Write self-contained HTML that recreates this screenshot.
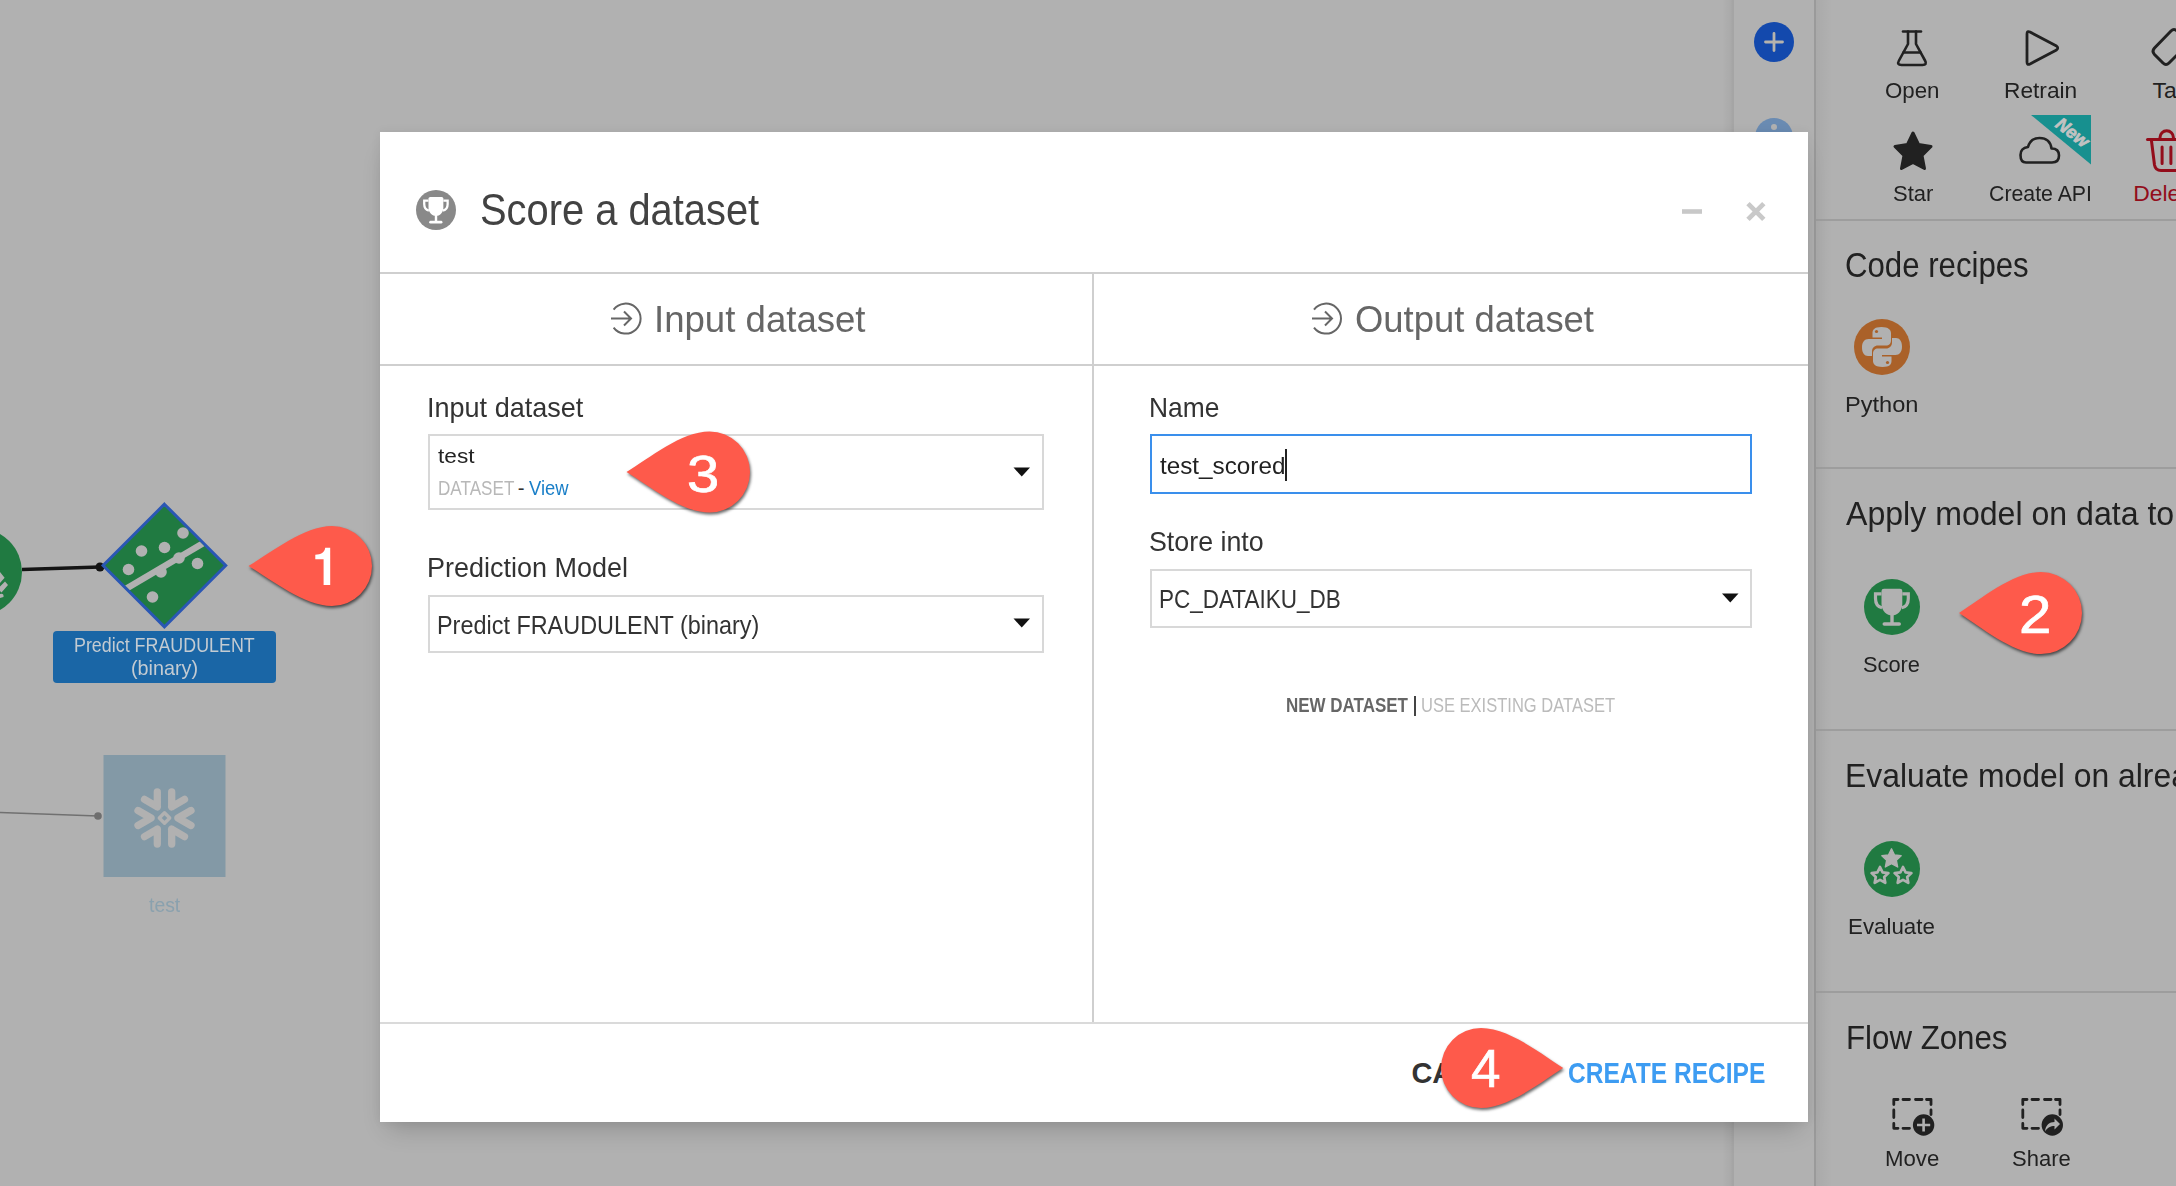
<!DOCTYPE html>
<html><head><meta charset="utf-8">
<style>
html,body{margin:0;padding:0;}
body{width:2176px;height:1186px;overflow:hidden;position:relative;background:#b1b1b1;font-family:"Liberation Sans",sans-serif;}
.t{position:absolute;white-space:nowrap;transform-origin:0 0;}
.abs{position:absolute;}
svg{position:absolute;left:0;top:0;overflow:visible;}
</style></head>
<body>
<!-- canvas column lines & panel shadow -->
<div class="abs" style="left:1722px;top:0;width:12px;height:1186px;background:linear-gradient(90deg,rgba(0,0,0,0) 0%,rgba(0,0,0,0.04) 70%,rgba(0,0,0,0.09) 100%);"></div>
<div class="abs" style="left:1733px;top:0;width:1px;height:1186px;background:#a5a5a5;"></div>
<div class="abs" style="left:1814px;top:0;width:2px;height:1186px;background:#9a9a9a;"></div>
<div class="abs" style="left:1816px;top:0;width:16px;height:1186px;background:linear-gradient(90deg,rgba(0,0,0,0.045),rgba(0,0,0,0));"></div>
<!-- panel separators -->
<div class="abs" style="left:1816px;top:219px;width:360px;height:2px;background:#9d9d9d;"></div>
<div class="abs" style="left:1816px;top:467px;width:360px;height:2px;background:#9d9d9d;"></div>
<div class="abs" style="left:1816px;top:729px;width:360px;height:2px;background:#9d9d9d;"></div>
<div class="abs" style="left:1816px;top:991px;width:360px;height:2px;background:#9d9d9d;"></div>

<svg width="2176" height="1186" viewBox="0 0 2176 1186">
  <!-- plus button -->
  <circle cx="1774" cy="42" r="20" fill="#1349ad"/>
  <path d="M1765.5,42 H1782.5 M1774,33.5 V50.5" stroke="#b5b3ad" stroke-width="2.8" stroke-linecap="round"/>
  <!-- info button (mostly hidden) -->
  <circle cx="1774" cy="137" r="19" fill="#6a8bb2"/>
  <circle cx="1774" cy="127" r="3" fill="#b1b1b1"/>

  <!-- flask (Open) -->
  <g fill="none" stroke="#212121" stroke-width="2.6" stroke-linecap="round" stroke-linejoin="round">
    <path d="M1903,31.5 H1921"/>
    <path d="M1908,31.5 V44 L1899,60.5 Q1896.5,65 1901.5,65 H1922.5 Q1927.5,65 1925,60.5 L1916,44 V31.5"/>
    <path d="M1903.5,52.5 H1920.5"/>
    <!-- play (Retrain) -->
    <path d="M2027,34 Q2027,30.5 2030,32 L2056.5,46 Q2059,48 2056.5,50 L2030,64 Q2027,65.5 2027,62 Z" stroke-width="2.8"/>
    <!-- tag (partial) -->
    <path d="M2192,46 L2177,31 Q2174,28 2171,31 L2154.5,48 Q2151.5,51.3 2154.5,54.5 L2163,63 Q2166,66 2169,63 L2192,40" stroke-width="3"/>
    <!-- cloud -->
    <path d="M2026,162.5 H2052 Q2059,162.5 2059,155.5 Q2059,148.5 2051.5,148.5 Q2050,138 2039.5,138 Q2030.5,138 2028,147 Q2020.5,148 2020.5,155 Q2020.5,162.5 2026,162.5 Z" stroke-width="2.6"/>
  </g>
  <!-- star filled -->
  <path d="M1913,133 L1918.5,144.5 L1931,146.5 L1922,155.5 L1924.5,168.5 L1913,162.5 L1901.5,168.5 L1904,155.5 L1895,146.5 L1907.5,144.5 Z" fill="#212121" stroke="#212121" stroke-width="3" stroke-linejoin="round"/>
  <!-- new ribbon -->
  <path d="M2031,115 H2091 V164.5 Z" fill="#17908f"/>
  <text x="0" y="0" transform="translate(2068.8,137.2) rotate(37)" font-family="Liberation Sans" font-weight="bold" font-style="italic" font-size="17.8" fill="#c2c2c2" stroke="#c2c2c2" stroke-width="0.7" text-anchor="middle">New</text>
  <!-- trash (partial, red) -->
  <g fill="none" stroke="#930d1b" stroke-width="3" stroke-linecap="round" stroke-linejoin="round">
    <path d="M2147.5,139.5 H2180"/>
    <path d="M2160,139 V137.5 A6.7,6.7 0 0 1 2173.4,137.5 V139"/>
    <path d="M2151.5,141 L2154.5,165 Q2155.5,170.5 2161,170.5 H2180"/>
    <path d="M2162.1,147 V163.5 M2170.9,147 V163.5"/>
  </g>

  <!-- python -->
  <circle cx="1882" cy="347" r="28" fill="#aa6129"/>
  <g fill="#b1b1b1">
    <path d="M1881.5,327 C1874,327 1872.5,330 1872.5,333 V337.5 H1882 V339 H1868.5 C1864.5,339 1862,342 1862,347.5 C1862,353 1864.5,356 1868,356 H1872 V351.5 C1872,348 1874.5,345.5 1878,345.5 H1886 C1889,345.5 1891,343.5 1891,340.5 V333 C1891,330 1888.5,327 1881.5,327 Z"/>
    <path d="M1882.5,367 C1890,367 1891.5,364 1891.5,361 V356.5 H1882 V355 H1895.5 C1899.5,355 1902,352 1902,346.5 C1902,341 1899.5,338 1896,338 H1892 V342.5 C1892,346 1889.5,348.5 1886,348.5 H1878 C1875,348.5 1873,350.5 1873,353.5 V361 C1873,364 1875.5,367 1882.5,367 Z"/>
  </g>
  <circle cx="1876.5" cy="331.5" r="1.6" fill="#aa6129"/>
  <circle cx="1887.5" cy="362.5" r="1.6" fill="#aa6129"/>

  <!-- score trophy -->
  <circle cx="1892" cy="607" r="28" fill="#207a41"/>
  <g transform="translate(1892,607)" fill="#b1b1b1">
    <path d="M-10.5,-16 Q-10.5,-18.3 -8,-18.3 H8 Q10.3,-18.3 10.3,-16 V-3 C10.3,4 5,8.5 0,8.5 C-5,8.5 -10.5,4 -10.5,-3 Z"/>
    <path d="M-10.5,-13.2 H-16.5 V-8.5 C-16.5,-3 -13.5,0 -10,0.8 M10.3,-13.2 H16.3 V-8.5 C16.3,-3 13.3,0 9.8,0.8" fill="none" stroke="#b1b1b1" stroke-width="3.2"/>
    <rect x="-1.7" y="7" width="3.4" height="9" />
    <rect x="-9.5" y="15.2" width="18.5" height="3.6" rx="1.8"/>
  </g>

  <!-- evaluate stars -->
  <circle cx="1892" cy="869" r="28" fill="#207a41"/>
  <path transform="translate(1891.5,858) scale(0.92) translate(-1891.5,-858)" d="M1891.5,848 L1894.8,854.8 L1902,855.6 L1896.8,860.5 L1898.2,867.8 L1891.5,864.2 L1884.8,867.8 L1886.2,860.5 L1881,855.6 L1888.2,854.8 Z" fill="#b1b1b1" stroke="#b1b1b1" stroke-width="1.5" stroke-linejoin="round"/>
  <g fill="none" stroke="#b1b1b1" stroke-width="2.7" stroke-linejoin="round">
    <path d="M1880,867 L1882.6,872.4 L1888.4,873.1 L1884.2,877 L1885.3,882.8 L1880,879.9 L1874.7,882.8 L1875.8,877 L1871.6,873.1 L1877.4,872.4 Z"/>
    <path d="M1903,867 L1905.6,872.4 L1911.4,873.1 L1907.2,877 L1908.3,882.8 L1903,879.9 L1897.7,882.8 L1898.8,877 L1894.6,873.1 L1900.4,872.4 Z"/>
  </g>

  <!-- move / share -->
  <g fill="none" stroke="#212121" stroke-width="2.8" stroke-linecap="round" stroke-linejoin="round">
    <path d="M1893.8,1104.5 V1099.5 H1898 M1926.5,1099.5 H1931 V1104.5 M1893.8,1123.5 V1128.3 H1898 M1903,1099.5 H1909.5 M1915.5,1099.5 H1922 M1893.8,1110 V1117.5 M1931,1110 V1114.5 M1903,1128.3 H1909.5"/>
    <path d="M2022.8,1104.5 V1099.5 H2027 M2055.5,1099.5 H2060 V1104.5 M2022.8,1123.5 V1128.3 H2027 M2032,1099.5 H2038.5 M2044.5,1099.5 H2051 M2022.8,1110 V1117.5 M2060,1110 V1114.5 M2032,1128.3 H2038.5"/>
  </g>
  <circle cx="1923.6" cy="1125" r="10.7" fill="#212121"/>
  <path d="M1917,1125 H1930.2 M1923.6,1118.4 V1131.6" stroke="#b1b1b1" stroke-width="2.6"/>
  <circle cx="2052.3" cy="1125" r="10.7" fill="#212121"/>
  <path d="M2045,1131.5 C2045.5,1125 2049.5,1122 2054.5,1122 V1118.5 L2060,1124 L2054.5,1129.5 V1126 C2050.5,1126 2047.5,1127.5 2045,1131.5 Z" fill="#b1b1b1"/>

  <!-- ======== flow ======== -->
  <circle cx="-21.8" cy="572" r="43.8" fill="#207a41"/>
  <path d="M0,572 L4.6,577.7 L0,583 Z M0,586.5 L5,581.5 L8,585 L1.5,592.5 L0,591 Z M0,594 Q4,593 3.5,597 L0,598 Z" fill="#b1b1b1"/>
  <path d="M22,569.5 L100,567" stroke="#141414" stroke-width="3.5"/>
  <circle cx="100" cy="567" r="4.5" fill="#141414"/>
  <path d="M164.4,504.2 L225.7,565.5 L164.4,626.8 L103.1,565.5 Z" fill="#207a41" stroke="#2a57b4" stroke-width="3"/>
  <clipPath id="dia"><path d="M164.4,506.3 L223.6,565.5 L164.4,624.7 L105.2,565.5 Z"/></clipPath>
  <g fill="#b1b1b1">
    <circle cx="183" cy="533" r="5.8"/>
    <circle cx="164.5" cy="547.5" r="5.8"/>
    <circle cx="141.5" cy="551" r="5.8"/>
    <circle cx="128.5" cy="569.5" r="5.8"/>
    <circle cx="197.5" cy="563.5" r="5.8"/>
    <circle cx="152.5" cy="597" r="5.8"/>
    <circle cx="179" cy="558" r="5.8"/>
    <circle cx="161" cy="572" r="5.8"/>
  </g>
  <path d="M118,593.5 L212,538" stroke="#b1b1b1" stroke-width="6.5" clip-path="url(#dia)"/>
  <rect x="53" y="631" width="223" height="52" rx="4" fill="#1a66a6"/>

  <!-- snowflake dataset -->
  <path d="M0,812.5 L98,816" stroke="#707070" stroke-width="1.5"/>
  <circle cx="98" cy="816" r="3.8" fill="#6e6e6e"/>
  <rect x="103.5" y="755" width="122" height="122" fill="#8399a6"/>
  <g transform="translate(164.5,818)" fill="none" stroke="#b1b1b1" stroke-width="7.3" stroke-linecap="round" stroke-linejoin="round">
    <path d="M-7.2,-11.2 V-26 M-7.2,-11.2 L-20,-18.6"/>
    <path d="M7.2,-11.2 V-26 M7.2,-11.2 L20,-18.6"/>
    <path d="M-7.2,11.2 V26 M-7.2,11.2 L-20,18.6"/>
    <path d="M7.2,11.2 V26 M7.2,11.2 L20,18.6"/>
    <path d="M-13.5,0 L-26.5,-7.5 M-13.5,0 L-26.5,7.5"/>
    <path d="M13.5,0 L26.5,-7.5 M13.5,0 L26.5,7.5"/>
    <path d="M0,-5.2 L5.2,0 L0,5.2 L-5.2,0 Z" stroke-width="3.4"/>
  </g>
</svg>

<!-- ======== modal ======== -->
<div class="abs" style="left:380px;top:132px;width:1428px;height:990px;background:#fff;box-shadow:0 14px 24px -8px rgba(0,0,0,0.2), 0 0 10px rgba(0,0,0,0.06);"></div>
<div class="abs" style="left:380px;top:272px;width:1428px;height:2px;background:#cfcfcf;"></div>
<div class="abs" style="left:380px;top:364px;width:1428px;height:2px;background:#cfcfcf;"></div>
<div class="abs" style="left:1092px;top:274px;width:2px;height:748px;background:#cfcfcf;"></div>
<div class="abs" style="left:380px;top:1022px;width:1428px;height:2px;background:#dadada;"></div>
<!-- inputs -->
<div class="abs" style="left:428px;top:434px;width:612px;height:72px;border:2px solid #d8d8d8;"></div>
<div class="abs" style="left:428px;top:595px;width:612px;height:54px;border:2px solid #d8d8d8;"></div>
<div class="abs" style="left:1150px;top:434px;width:598px;height:56px;border:2px solid #3a8fec;"></div>
<div class="abs" style="left:1150px;top:568.5px;width:598px;height:55px;border:2px solid #d8d8d8;"></div>
<div class="abs" style="left:1285px;top:449px;width:2px;height:32px;background:#222;"></div>
<div class="abs" style="left:1413.8px;top:696px;width:1.8px;height:19.5px;background:#444;"></div>

<svg width="2176" height="1186" viewBox="0 0 2176 1186">
  <!-- title trophy -->
  <circle cx="436" cy="210" r="20" fill="#898989"/>
  <g transform="translate(436,210) scale(0.714)" fill="#fff">
    <path d="M-10.5,-16 Q-10.5,-18.3 -8,-18.3 H8 Q10.3,-18.3 10.3,-16 V-3 C10.3,4 5,8.5 0,8.5 C-5,8.5 -10.5,4 -10.5,-3 Z"/>
    <path d="M-10.5,-13.2 H-16.5 V-8.5 C-16.5,-3 -13.5,0 -10,0.8 M10.3,-13.2 H16.3 V-8.5 C16.3,-3 13.3,0 9.8,0.8" fill="none" stroke="#fff" stroke-width="3.2"/>
    <rect x="-1.7" y="7" width="3.4" height="9" />
    <rect x="-9.5" y="15.2" width="18.5" height="3.6" rx="1.8"/>
  </g>
  <!-- minimize / close -->
  <path d="M1682,211.5 H1702" stroke="#c8c8c8" stroke-width="4.6"/>
  <path d="M1748,203.6 L1763.8,219.4 M1763.8,203.6 L1748,219.4" stroke="#c9c9c9" stroke-width="4.8"/>
  <!-- tab icons -->
  <g fill="none" stroke="#666" stroke-width="2">
    <path d="M613.6,309.6 A15,15 0 1 1 613.6,327.6"/>
    <path d="M611,318.5 H631 M624,311.5 L631,318.5 L624,325.5"/>
    <path d="M1314,309.6 A15,15 0 1 1 1314,327.6"/>
    <path d="M1312,318.5 H1332 M1325,311.5 L1332,318.5 L1325,325.5"/>
  </g>
  <!-- carets -->
  <path d="M1013.5,467.5 H1030 L1021.75,476.5 Z" fill="#111"/>
  <path d="M1013.5,618.5 H1030 L1021.75,627.5 Z" fill="#111"/>
  <path d="M1722,593.5 H1738.5 L1730.25,602.5 Z" fill="#111"/>
</svg>

<div class="t " style="left:1885.00px;top:79.41px;font-size:22.90px;line-height:22.90px;color:#212121;font-weight:normal;transform:scaleX(0.9725);">Open</div>
<div class="t " style="left:2004.18px;top:79.41px;font-size:22.90px;line-height:22.90px;color:#212121;font-weight:normal;transform:scaleX(0.9925);">Retrain</div>
<div class="t " style="left:2152.54px;top:79.41px;font-size:22.90px;line-height:22.90px;color:#212121;font-weight:normal;">Ta</div>
<div class="t " style="left:1893.01px;top:182.41px;font-size:22.90px;line-height:22.90px;color:#212121;font-weight:normal;transform:scaleX(0.9622);">Star</div>
<div class="t " style="left:1988.94px;top:182.41px;font-size:22.90px;line-height:22.90px;color:#212121;font-weight:normal;transform:scaleX(0.9302);">Create API</div>
<div class="t " style="left:2133.17px;top:182.41px;font-size:22.90px;line-height:22.90px;color:#930d1b;font-weight:normal;">Dele</div>
<div class="t " style="left:1845.44px;top:248.09px;font-size:34.49px;line-height:34.49px;color:#212121;font-weight:normal;transform:scaleX(0.9040);">Code recipes</div>
<div class="t " style="left:1845.11px;top:393.41px;font-size:22.90px;line-height:22.90px;color:#212121;font-weight:normal;transform:scaleX(1.0310);">Python</div>
<div class="t " style="left:1846.00px;top:495.96px;font-size:34.06px;line-height:34.06px;color:#212121;font-weight:normal;transform:scaleX(0.9422);">Apply model on data to</div>
<div class="t " style="left:1863.02px;top:653.41px;font-size:22.90px;line-height:22.90px;color:#212121;font-weight:normal;transform:scaleX(0.9531);">Score</div>
<div class="t " style="left:1845.45px;top:757.96px;font-size:34.06px;line-height:34.06px;color:#212121;font-weight:normal;transform:scaleX(0.9366);">Evaluate model on already</div>
<div class="t " style="left:1848.22px;top:915.21px;font-size:22.90px;line-height:22.90px;color:#212121;font-weight:normal;transform:scaleX(0.9743);">Evaluate</div>
<div class="t " style="left:1845.50px;top:1019.96px;font-size:34.06px;line-height:34.06px;color:#212121;font-weight:normal;transform:scaleX(0.9177);">Flow Zones</div>
<div class="t " style="left:1885.22px;top:1146.91px;font-size:22.90px;line-height:22.90px;color:#212121;font-weight:normal;transform:scaleX(0.9694);">Move</div>
<div class="t " style="left:2012.01px;top:1146.91px;font-size:22.90px;line-height:22.90px;color:#212121;font-weight:normal;transform:scaleX(0.9616);">Share</div>
<div class="t " style="left:73.57px;top:634.62px;font-size:20.29px;line-height:20.29px;color:#c3cbd2;font-weight:normal;transform:scaleX(0.8813);">Predict FRAUDULENT</div>
<div class="t " style="left:130.81px;top:657.62px;font-size:20.29px;line-height:20.29px;color:#c3cbd2;font-weight:normal;transform:scaleX(0.9751);">(binary)</div>
<div class="t " style="left:149.31px;top:894.62px;font-size:20.29px;line-height:20.29px;color:#8aa1ae;font-weight:normal;transform:scaleX(0.9547);">test</div>
<div class="t " style="left:480.21px;top:188.05px;font-size:44.35px;line-height:44.35px;color:#424242;font-weight:normal;transform:scaleX(0.8987);">Score a dataset</div>
<div class="t " style="left:653.71px;top:301.51px;font-size:36.96px;line-height:36.96px;color:#666;font-weight:normal;transform:scaleX(0.9900);">Input dataset</div>
<div class="t " style="left:1355.36px;top:301.51px;font-size:36.96px;line-height:36.96px;color:#666;font-weight:normal;transform:scaleX(0.9858);">Output dataset</div>
<div class="t " style="left:427.17px;top:393.69px;font-size:27.54px;line-height:27.54px;color:#333;font-weight:normal;transform:scaleX(0.9818);">Input dataset</div>
<div class="t " style="left:438.46px;top:444.72px;font-size:21.00px;line-height:21.00px;color:#222;font-weight:normal;transform:scaleX(1.0782);">test</div>
<div class="t " style="left:437.63px;top:477.62px;font-size:20.29px;line-height:20.29px;color:#b8b8b8;font-weight:normal;transform:scaleX(0.8434);">DATASET</div>
<div class="t " style="left:517.69px;top:477.62px;font-size:20.29px;line-height:20.29px;color:#333;font-weight:normal;">-</div>
<div class="t " style="left:528.91px;top:477.62px;font-size:20.29px;line-height:20.29px;color:#1a7fc8;font-weight:normal;transform:scaleX(0.9076);">View</div>
<div class="t " style="left:426.84px;top:553.17px;font-size:28.26px;line-height:28.26px;color:#333;font-weight:normal;transform:scaleX(0.9549);">Prediction Model</div>
<div class="t " style="left:437.13px;top:611.97px;font-size:26.38px;line-height:26.38px;color:#333;font-weight:normal;transform:scaleX(0.8880);">Predict FRAUDULENT (binary)</div>
<div class="t " style="left:1148.89px;top:393.93px;font-size:27.25px;line-height:27.25px;color:#333;font-weight:normal;transform:scaleX(0.9681);">Name</div>
<div class="t " style="left:1160.14px;top:454.48px;font-size:24.00px;line-height:24.00px;color:#222;font-weight:normal;transform:scaleX(1.0110);">test_scored</div>
<div class="t " style="left:1149.39px;top:528.13px;font-size:27.25px;line-height:27.25px;color:#333;font-weight:normal;transform:scaleX(0.9834);">Store into</div>
<div class="t " style="left:1159.20px;top:586.17px;font-size:26.38px;line-height:26.38px;color:#333;font-weight:normal;transform:scaleX(0.8532);">PC_DATAIKU_DB</div>
<div class="t " style="left:1285.90px;top:694.55px;font-size:20.72px;line-height:20.72px;color:#666;font-weight:bold;transform:scaleX(0.8191);">NEW DATASET</div>
<div class="t " style="left:1420.76px;top:694.55px;font-size:20.72px;line-height:20.72px;color:#bbb;font-weight:normal;transform:scaleX(0.7976);">USE EXISTING DATASET</div>
<div class="t " style="left:1411.44px;top:1059.46px;font-size:28.99px;line-height:28.99px;color:#333;font-weight:bold;">CANCEL</div>
<div class="t " style="left:1568.02px;top:1059.46px;font-size:28.99px;line-height:28.99px;color:#3d9cf2;font-weight:bold;transform:scaleX(0.8469);">CREATE RECIPE</div>

<!-- callouts -->
<svg width="2176" height="1186" viewBox="0 0 2176 1186" style="filter:drop-shadow(1px 2.5px 1.5px rgba(0,0,0,0.6));">
  <g fill="#fe5a4b">
    <path transform="translate(332,566)" d="M-83.5,0 C-60,-14 -28,-40 0,-40 A40,40 0 0 1 0,40 C-28,40 -60,14 -83.5,0 Z"/>
    <path transform="translate(2041,613)" d="M-82,0 C-60,-14 -28,-41 0,-41 A41,41 0 0 1 0,41 C-28,41 -60,14 -82,0 Z"/>
    <path transform="translate(709.5,472)" d="M-83,0 C-60,-14 -28,-40.5 0,-40.5 A40.5,40.5 0 0 1 0,40.5 C-28,40.5 -60,14 -83,0 Z"/>
    <path transform="translate(1481,1068)" d="M82.2,0 C60,-14 28,-40 0,-40 A40,40 0 0 0 0,40 C28,40 60,14 82.2,0 Z"/>
  </g>
</svg>
<svg width="2176" height="1186" viewBox="0 0 2176 1186"><path d="M323.6,585 H330.2 V547.8 H325.2 C324.6,552.5 321,554.6 315.3,554.8 V559.2 H323.6 Z" fill="#fff"/></svg>
<div class="t cd" style="left:2019.09px;top:588.40px;font-size:53.62px;line-height:53.62px;color:#fff;font-weight:normal;transform:scaleX(1.0861);-webkit-text-stroke:0.7px #fff;">2</div>
<div class="t cd" style="left:687.08px;top:448.76px;font-size:51.30px;line-height:51.30px;color:#fff;font-weight:normal;transform:scaleX(1.1285);-webkit-text-stroke:0.7px #fff;">3</div>
<div class="t cd" style="left:1470.64px;top:1041.96px;font-size:54.49px;line-height:54.49px;color:#fff;font-weight:normal;transform:scaleX(0.9739);-webkit-text-stroke:0.7px #fff;">4</div>
</body></html>
